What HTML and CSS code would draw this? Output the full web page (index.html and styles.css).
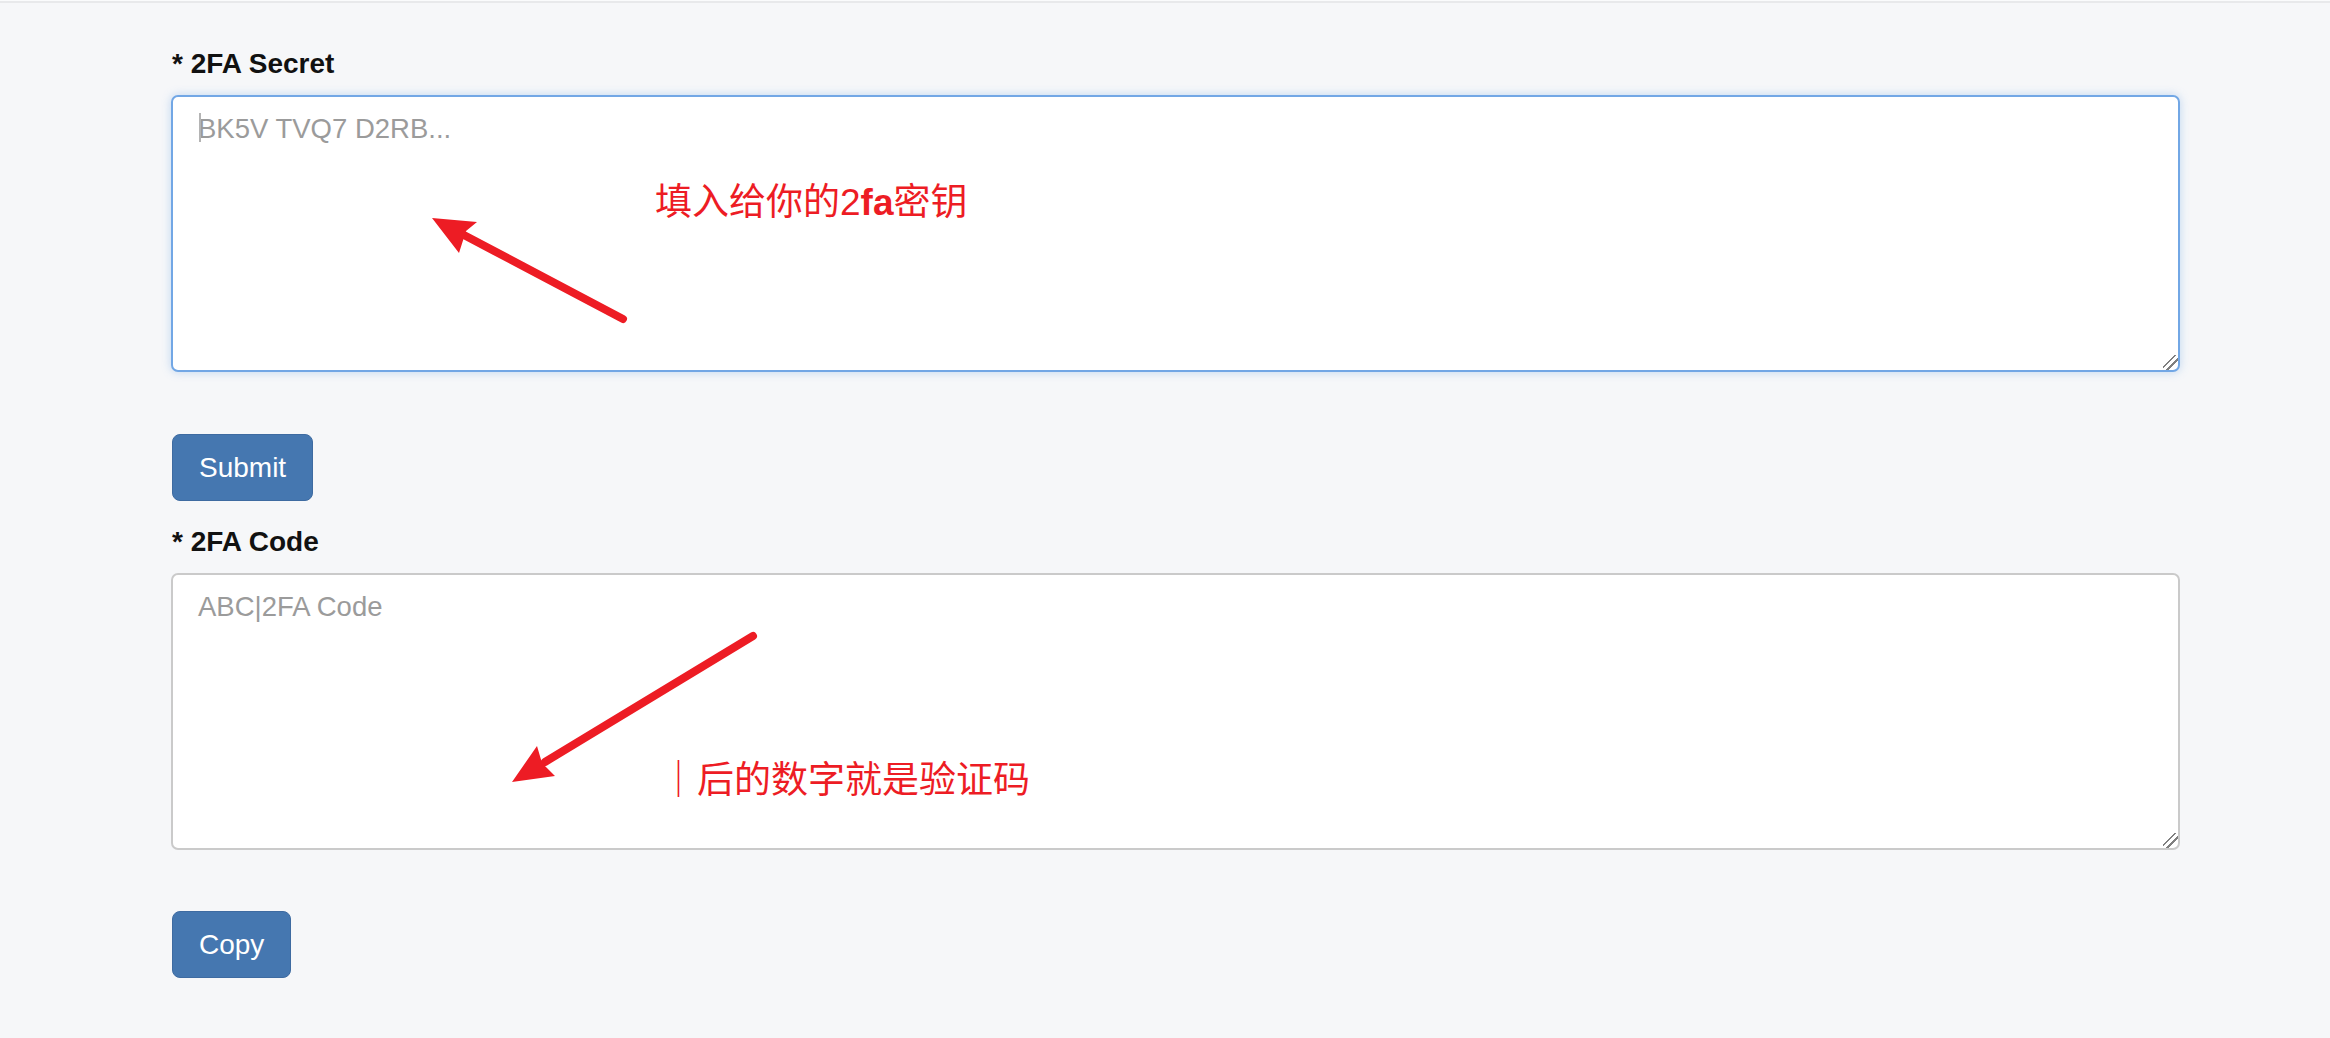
FILE: index.html
```html
<!DOCTYPE html>
<html lang="zh-CN">
<head>
<meta charset="utf-8">
<title>2FA</title>
<link rel="stylesheet" href="styles.css">
</head>
<body>
<div class="page">
  <div class="topbar"></div>
  <main class="form">
    <label class="field-label" for="secret">* 2FA Secret</label>
    <div class="field-wrap">
      <textarea id="secret" class="field field-focus" placeholder="BK5V TVQ7 D2RB..."></textarea>
      <span class="caret"></span>
    </div>
    <button class="btn btn-submit" type="button">Submit</button>
    <label class="field-label label-code" for="code">* 2FA Code</label>
    <div class="field-wrap">
      <textarea id="code" class="field" placeholder="ABC|2FA Code"></textarea>
    </div>
    <button class="btn btn-copy" type="button">Copy</button>
  </main>

  <svg class="arrows" width="2330" height="1038" viewBox="0 0 2330 1038" xmlns="http://www.w3.org/2000/svg">
    <line x1="623" y1="319" x2="462" y2="234" stroke="#ed1c24" stroke-width="8" stroke-linecap="round"/>
    <polygon points="432,218 477,222 466,231 459,253" fill="#ed1c24"/>
    <line x1="753" y1="636" x2="545" y2="762" stroke="#ed1c24" stroke-width="8" stroke-linecap="round"/>
    <polygon points="512,782 537,746 542,763 555,776" fill="#ed1c24"/>
  </svg>
  <div class="note note-1">填入给你的2<b>fa</b>密钥</div>
  <div class="note note-2">｜后的数字就是验证码</div>
</div>
</body>
</html>
```
FILE: styles.css
```css
html, body {
  margin: 0;
  padding: 0;
}
body {
  background: #f6f7f9;
  font-family: "Liberation Sans", Arial, sans-serif;
  color: #111;
}
.page {
  position: relative;
  width: 2330px;
  min-height: 1038px;
}
.topbar {
  height: 1px;
  background: #fafbfc;
  border-bottom: 2px solid #e8e9eb;
}
.form {
  display: flex;
  flex-direction: column;
  align-items: flex-start;
  width: 2009px;
  margin-left: 171px;
  padding-top: 45px;
}
.field-label {
  display: block;
  font-size: 28px;
  font-weight: bold;
  line-height: 32px;
  height: 32px;
  padding-left: 1px;
  margin-bottom: 15px;
  color: #111;
}
.label-code {
  margin-top: 25px;
}
.field-wrap {
  position: relative;
  width: 100%;
}
.field {
  display: block;
  box-sizing: border-box;
  width: 100%;
  height: 277px;
  margin: 0;
  padding: 15px 25px;
  border: 2px solid #cacaca;
  border-radius: 7px;
  background: #fff;
  font-family: "Liberation Sans", Arial, sans-serif;
  font-size: 27.5px;
  line-height: 34px;
  color: #333;
  outline: none;
}
.field::placeholder {
  color: #9b9b9b;
}
.field::-webkit-resizer {
  background: linear-gradient(135deg, transparent 0 38%, #7f7f7f 38% 46%, transparent 46% 60%, #7f7f7f 60% 68%, transparent 68%);
}
.field-focus {
  border-color: #72a7e5;
  box-shadow: 0 0 10px rgba(102, 160, 230, 0.38);
}
.caret {
  position: absolute;
  left: 28px;
  top: 18px;
  width: 2px;
  height: 29px;
  background: #b4b4b4;
}
.btn {
  box-sizing: border-box;
  height: 67px;
  margin: 0;
  padding: 0 26px;
  border: 1px solid #3e6ba1;
  border-radius: 8px;
  background: #4577b0;
  color: #fff;
  font-family: "Liberation Sans", Arial, sans-serif;
  font-size: 28px;
  line-height: 65px;
  margin-left: 1px;
}
.btn-submit {
  margin-top: 62px;
}
.btn-copy {
  margin-top: 61px;
}
.arrows {
  position: absolute;
  left: 0;
  top: 0;
  pointer-events: none;
}
.note {
  position: absolute;
  font-family: "Liberation Sans", "Noto Sans CJK SC", sans-serif;
  font-size: 37px;
  line-height: 40px;
  color: #ed1c24;
  white-space: nowrap;
}
.note b {
  font-weight: bold;
}
.note-1 {
  left: 655px;
  top: 183px;
}
.note-2 {
  left: 660px;
  top: 761px;
}
```
